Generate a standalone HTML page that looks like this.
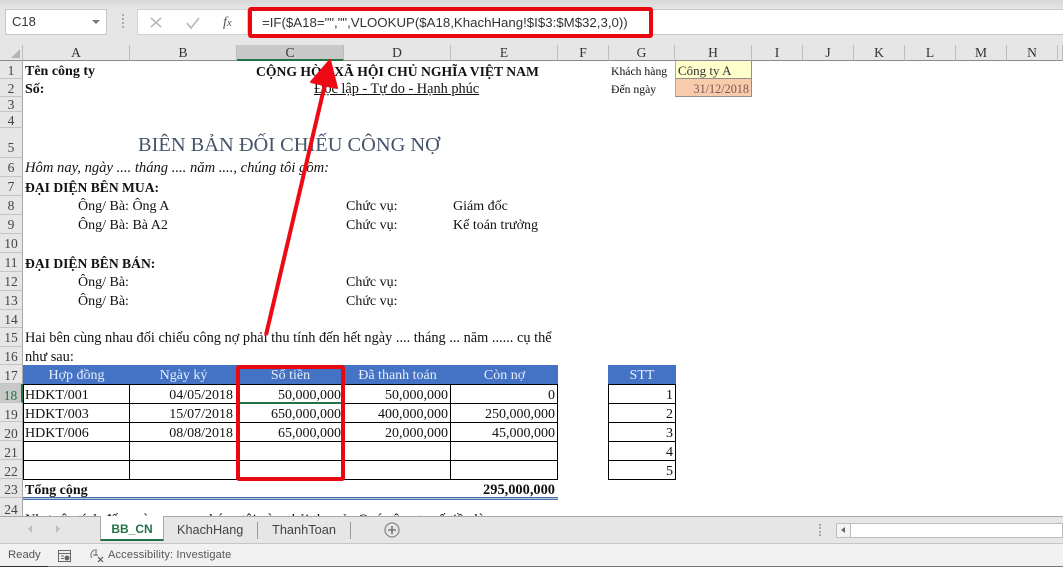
<!DOCTYPE html>
<html><head><meta charset="utf-8"><style>
html,body{margin:0;padding:0;background:#fff}
#p{position:relative;width:1063px;height:567px;overflow:hidden;background:#fff;font-family:"Liberation Serif",serif;font-size:14px;color:#111}
#p div{position:absolute;box-sizing:border-box}
.t{white-space:nowrap;line-height:19px;height:19px;transform:translateY(1px)}
.b{font-weight:bold}
.r{text-align:right}
.c{text-align:center}
.u{font-family:"Liberation Sans",sans-serif;white-space:nowrap}
.rh{left:0;width:23px;background:#e6e6e6;border-bottom:1px solid #c4c4c4;border-right:1px solid #a8a8a8;text-align:center;font-size:13.5px;color:#444;white-space:nowrap}
.ch{top:45px;height:16px;background:#e6e6e6;border-right:1px solid #bdbdbd;border-bottom:1px solid #8a8a8a;text-align:center;font-size:13.5px;line-height:15px;color:#333}
.hd{background:#4472c4;color:#e8eefa;text-align:center;height:19px;line-height:21px;top:365px}
.cell{border-right:1px solid #000;border-bottom:1px solid #000;height:19px;line-height:22px;padding:0 2px 0 1px;text-align:right;white-space:nowrap}
</style></head><body><div id="p">
<!-- top ribbon / formula bar -->
<div style="left:0;top:0;width:1063px;height:45px;background:#e6e6e6"></div>
<div style="left:0;top:0;width:1063px;height:9px;background:linear-gradient(#d8d8d8,#e6e6e6)"></div>
<div style="left:5px;top:9px;width:102px;height:26px;background:#fff;border:1px solid #c6c6c6"></div>
<div class="u" style="left:12px;top:14px;font-size:13px;line-height:16px;color:#333">C18</div>
<div style="left:92px;top:20px;width:0;height:0;border-left:4px solid transparent;border-right:4px solid transparent;border-top:4px solid #777"></div>
<div style="left:122px;top:14px;width:1px;height:14px;border-left:2px dotted #aaa"></div>
<div style="left:137px;top:9px;width:111px;height:26px;background:#fff;border:1px solid #d0d0d0"></div>
<svg style="position:absolute;left:137px;top:9px" width="111" height="26"><path d="M14 9l10 9M24 9l-10 9" stroke="#bbb" stroke-width="1.6" fill="none"/><path d="M50 14l4 5 8-10" stroke="#bbb" stroke-width="1.8" fill="none"/></svg>
<div style="left:223px;top:15px;font-style:italic;font-size:14px;line-height:16px;color:#555">f<span style="font-size:11px">x</span></div>
<div style="left:248px;top:9px;width:815px;height:26px;background:#fff;border-top:1px solid #c6c6c6;border-bottom:1px solid #c6c6c6"></div>
<div class="u" style="left:262px;top:14px;font-size:13.25px;line-height:17px;color:#333">=IF($A18="","",VLOOKUP($A18,KhachHang!$I$3:$M$32,3,0))</div>
<div style="left:0;top:35px;width:1063px;height:10px;background:#e6e6e6"></div>
<!-- column headers -->
<div class="ch" style="left:0;width:23px;background:#e6e6e6"></div>
<div style="left:11px;top:49px;width:0;height:0;border-left:9px solid transparent;border-bottom:9px solid #b5b5b5"></div>
<div class="ch" style="left:23px;width:107px">A</div>
<div class="ch" style="left:130px;width:107px">B</div>
<div class="ch" style="left:237px;width:107px;background:#c8c8c8;border-bottom:2px solid #217346;color:#333">C</div>
<div class="ch" style="left:344px;width:107px">D</div>
<div class="ch" style="left:451px;width:107px">E</div>
<div class="ch" style="left:558px;width:51px">F</div>
<div class="ch" style="left:609px;width:66px">G</div>
<div class="ch" style="left:675px;width:77px">H</div>
<div class="ch" style="left:752px;width:51px">I</div>
<div class="ch" style="left:803px;width:51px">J</div>
<div class="ch" style="left:854px;width:51px">K</div>
<div class="ch" style="left:905px;width:51px">L</div>
<div class="ch" style="left:956px;width:51px">M</div>
<div class="ch" style="left:1007px;width:51px">N</div>
<div class="ch" style="left:1058px;width:5px"></div>
<!-- row headers -->
<div class="rh" style="top:61px;height:18px;line-height:19px">1</div>
<div class="rh" style="top:79px;height:18px;line-height:19px">2</div>
<div class="rh" style="top:97px;height:15px;line-height:16px">3</div>
<div class="rh" style="top:112px;height:16px;line-height:17px">4</div>
<div class="rh" style="top:128px;height:30px;line-height:40px">5</div>
<div class="rh" style="top:158px;height:19px;line-height:19px">6</div>
<div class="rh" style="top:177px;height:19px;line-height:19px">7</div>
<div class="rh" style="top:196px;height:19px;line-height:19px">8</div>
<div class="rh" style="top:215px;height:19px;line-height:19px">9</div>
<div class="rh" style="top:234px;height:19px;line-height:19px">10</div>
<div class="rh" style="top:253px;height:19px;line-height:19px">11</div>
<div class="rh" style="top:272px;height:19px;line-height:19px">12</div>
<div class="rh" style="top:291px;height:19px;line-height:19px">13</div>
<div class="rh" style="top:310px;height:18px;line-height:19px">14</div>
<div class="rh" style="top:328px;height:19px;line-height:19px">15</div>
<div class="rh" style="top:347px;height:18px;line-height:19px">16</div>
<div class="rh" style="top:365px;height:19px;line-height:21px">17</div>
<div class="rh" style="top:384px;height:19px;line-height:23px;background:#c8c8c8;border-right:2px solid #217346;color:#217346">18</div>
<div class="rh" style="top:403px;height:19px;line-height:23px">19</div>
<div class="rh" style="top:422px;height:19px;line-height:23px">20</div>
<div class="rh" style="top:441px;height:19px;line-height:23px">21</div>
<div class="rh" style="top:460px;height:19px;line-height:23px">22</div>
<div class="rh" style="top:479px;height:19px;line-height:22px">23</div>
<div class="rh" style="top:498px;height:19px;line-height:24px">24</div>
<!-- sheet text -->
<div class="t b" style="left:25px;top:61px">Tên công ty</div>
<div class="t b" style="left:25px;top:79px">Số:</div>
<div class="t b" style="left:256px;top:61px;font-size:13.66px">CỘNG HÒA XÃ HỘI CHỦ NGHĨA VIỆT NAM</div>
<div class="t" style="left:314px;top:79px;font-size:14.3px;text-decoration:underline">Độc lập - Tự do - Hạnh phúc</div>
<div class="t" style="left:611px;top:61px;font-size:11.7px">Khách hàng</div>
<div class="t" style="left:611px;top:79px;font-size:11.7px">Đến ngày</div>
<div style="left:675px;top:61px;width:77px;height:18px;background:#ffffcc;border-right:1px solid #8f8f8f;border-bottom:1px solid #8f8f8f;border-left:1px solid #aaa;padding-left:2px;line-height:20px;font-size:13px;white-space:nowrap;color:#333">Công ty A</div>
<div style="left:675px;top:79px;width:77px;height:18px;background:#f8cbad;border-right:1px solid #8f8f8f;border-bottom:1px solid #8f8f8f;border-left:1px solid #aaa;padding-right:2px;text-align:right;line-height:20px;font-size:12.2px;color:#7a5a50">31/12/2018</div>
<div class="t" style="left:138px;top:131px;font-size:20.4px;line-height:26px;height:26px;color:#44546a">BIÊN BẢN ĐỐI CHIẾU CÔNG NỢ</div>
<div class="t" style="left:25px;top:158px;font-size:14.6px;font-style:italic">Hôm nay, ngày .... tháng .... năm ...., chúng tôi gồm:</div>
<div class="t b" style="left:25px;top:177px;font-size:13.6px">ĐẠI DIỆN BÊN MUA:</div>
<div class="t" style="left:78px;top:196px">Ông/ Bà: Ông A</div>
<div class="t" style="left:346px;top:196px">Chức vụ:</div>
<div class="t" style="left:453px;top:196px">Giám đốc</div>
<div class="t" style="left:78px;top:215px">Ông/ Bà: Bà A2</div>
<div class="t" style="left:346px;top:215px">Chức vụ:</div>
<div class="t" style="left:453px;top:215px">Kế toán trưởng</div>
<div class="t b" style="left:25px;top:253px;font-size:13.6px">ĐẠI DIỆN BÊN BÁN:</div>
<div class="t" style="left:78px;top:272px">Ông/ Bà:</div>
<div class="t" style="left:346px;top:272px">Chức vụ:</div>
<div class="t" style="left:78px;top:291px">Ông/ Bà:</div>
<div class="t" style="left:346px;top:291px">Chức vụ:</div>
<div class="t" style="left:25px;top:328px;font-size:14.35px">Hai bên cùng nhau đối chiếu công nợ phải thu tính đến hết ngày .... tháng ... năm ...... cụ thể</div>
<div class="t" style="left:25px;top:347px;font-size:14.35px">như sau:</div>
<!-- table -->
<div class="hd" style="left:23px;width:107px">Hợp đồng</div>
<div class="hd" style="left:130px;width:107px">Ngày ký</div>
<div class="hd" style="left:237px;width:107px">Số tiền</div>
<div class="hd" style="left:344px;width:107px">Đã thanh toán</div>
<div class="hd" style="left:451px;width:107px">Còn nợ</div>
<div class="hd" style="left:608px;width:68px">STT</div>
<div style="left:23px;top:384px;width:535px;height:1px;background:#000"></div>
<div style="left:608px;top:384px;width:68px;height:1px;background:#000"></div>

<div class="cell" style="left:23px;top:385px;width:107px;text-align:left;border-left:1px solid #000">HDKT/001</div>
<div class="cell" style="left:130px;top:385px;width:107px;padding-right:3px">04/05/2018</div>
<div class="cell" style="left:237px;top:385px;width:107px">50,000,000</div>
<div class="cell" style="left:344px;top:385px;width:107px">50,000,000</div>
<div class="cell" style="left:451px;top:385px;width:107px">0</div>
<div class="cell" style="left:23px;top:404px;width:107px;text-align:left;border-left:1px solid #000">HDKT/003</div>
<div class="cell" style="left:130px;top:404px;width:107px;padding-right:3px">15/07/2018</div>
<div class="cell" style="left:237px;top:404px;width:107px">650,000,000</div>
<div class="cell" style="left:344px;top:404px;width:107px">400,000,000</div>
<div class="cell" style="left:451px;top:404px;width:107px">250,000,000</div>
<div class="cell" style="left:23px;top:423px;width:107px;text-align:left;border-left:1px solid #000">HDKT/006</div>
<div class="cell" style="left:130px;top:423px;width:107px;padding-right:3px">08/08/2018</div>
<div class="cell" style="left:237px;top:423px;width:107px">65,000,000</div>
<div class="cell" style="left:344px;top:423px;width:107px">20,000,000</div>
<div class="cell" style="left:451px;top:423px;width:107px">45,000,000</div>
<div class="cell" style="left:23px;top:442px;width:107px;border-left:1px solid #000"></div>
<div class="cell" style="left:130px;top:442px;width:107px"></div>
<div class="cell" style="left:237px;top:442px;width:107px"></div>
<div class="cell" style="left:344px;top:442px;width:107px"></div>
<div class="cell" style="left:451px;top:442px;width:107px"></div>
<div class="cell" style="left:23px;top:461px;width:107px;border-left:1px solid #000"></div>
<div class="cell" style="left:130px;top:461px;width:107px"></div>
<div class="cell" style="left:237px;top:461px;width:107px"></div>
<div class="cell" style="left:344px;top:461px;width:107px"></div>
<div class="cell" style="left:451px;top:461px;width:107px"></div>

<div class="cell" style="left:608px;top:385px;width:68px;border-left:1px solid #000">1</div>
<div class="cell" style="left:608px;top:404px;width:68px;border-left:1px solid #000">2</div>
<div class="cell" style="left:608px;top:423px;width:68px;border-left:1px solid #000">3</div>
<div class="cell" style="left:608px;top:442px;width:68px;border-left:1px solid #000">4</div>
<div class="cell" style="left:608px;top:461px;width:68px;border-left:1px solid #000">5</div>

<div style="left:238px;top:402px;width:105px;height:2px;background:#217346"></div>
<div class="t b" style="left:25px;top:480px">Tổng cộng</div>
<div class="t b r" style="left:451px;top:480px;width:104px;font-size:14.4px">295,000,000</div>
<div style="left:23px;top:497px;width:535px;height:3px;background:#b9c8e0;border-top:1px solid #4a6fa8;border-bottom:1px solid #4a6fa8"></div>
<div class="t" style="left:25px;top:510px;font-size:14.35px">Như vậy tính đến ngày .........., chúng tôi còn phải thu của Quý công ty số tiền là:</div>

<!-- red overlay -->
<div style="left:236px;top:365px;width:109px;height:116px;border:4px solid #e8080f;border-radius:3px"></div>
<div style="left:248px;top:7px;width:405px;height:31px;border:4px solid #e8080f;border-radius:3px"></div>
<svg style="position:absolute;left:0;top:0" width="1063" height="567"><path d="M266 335L325 84" stroke="#ee0a14" stroke-width="4" fill="none"/><path d="M330 60L311 82L337 88Z" fill="#ee0a14" stroke="#ee0a14" stroke-width="2" stroke-linejoin="round"/></svg>

<!-- tab bar -->
<div style="left:0;top:516px;width:1063px;height:28px;background:#e6e6e6;border-top:1px solid #a8a8a8;border-bottom:1px solid #c6c6c6"></div>
<div style="left:28px;top:525px;width:0;height:0;border-top:4px solid transparent;border-bottom:4px solid transparent;border-right:4px solid #bdbdbd"></div>
<div style="left:56px;top:525px;width:0;height:0;border-top:4px solid transparent;border-bottom:4px solid transparent;border-left:4px solid #bdbdbd"></div>
<div class="u" style="left:100px;top:516px;width:64px;height:25px;background:#fff;border-left:1px solid #a8a8a8;border-right:1px solid #a8a8a8;border-bottom:2px solid #217346;text-align:center;line-height:26px;font-size:12px;font-weight:bold;color:#217346">BB_CN</div>
<div class="u" style="left:177px;top:518px;font-size:12.7px;line-height:24px;color:#444">KhachHang</div>
<div style="left:257px;top:522px;width:1px;height:17px;background:#999"></div>
<div class="u" style="left:272px;top:518px;font-size:12.8px;line-height:24px;color:#444">ThanhToan</div>
<div style="left:350px;top:522px;width:1px;height:17px;background:#999"></div>
<svg style="position:absolute;left:384px;top:522px" width="17" height="17"><circle cx="8" cy="8" r="7" fill="none" stroke="#8a8a8a" stroke-width="1.3"/><path d="M8 4v8M4 8h8" stroke="#777" stroke-width="1.6"/></svg>
<div style="left:819px;top:524px;width:1px;height:12px;border-left:2px dotted #aaa"></div>
<div style="left:836px;top:523px;width:227px;height:15px;background:#fff;border:1px solid #bdbdbd"></div>
<div style="left:836px;top:523px;width:15px;height:15px;background:#f4f4f4;border:1px solid #bdbdbd"></div>
<div style="left:841px;top:527px;width:0;height:0;border-top:3.5px solid transparent;border-bottom:3.5px solid transparent;border-right:4px solid #666"></div>
<!-- status bar -->
<div style="left:0;top:544px;width:1063px;height:22px;background:#f1f1f1"></div>
<div style="left:0;top:566px;width:1063px;height:1px;background:#777"></div>
<div style="left:0;top:566px;width:48px;height:1px;background:#333"></div>
<div class="u" style="left:8px;top:548px;font-size:11.3px;line-height:15px;color:#555">Ready</div>
<svg style="position:absolute;left:57px;top:549px" width="16" height="14"><path d="M1.5 1.5h12v11h-12zM1.5 4.5h12M4 7h3M4 9.500h3" fill="none" stroke="#666"/><circle cx="10" cy="9" r="2.500" fill="#666"/></svg>
<svg style="position:absolute;left:88px;top:548px" width="17" height="15"><path d="M7 2a5 5 0 0 0-3 8" fill="none" stroke="#777"/><path d="M8 1v7M5 7h5" fill="none" stroke="#666"/><path d="M10 9l5 5M15 9l-5 5" stroke="#555" stroke-width="1.200"/></svg>
<div class="u" style="left:108px;top:548px;font-size:11px;line-height:15px;letter-spacing:.16px;color:#555">Accessibility: Investigate</div>
</div></body></html>
